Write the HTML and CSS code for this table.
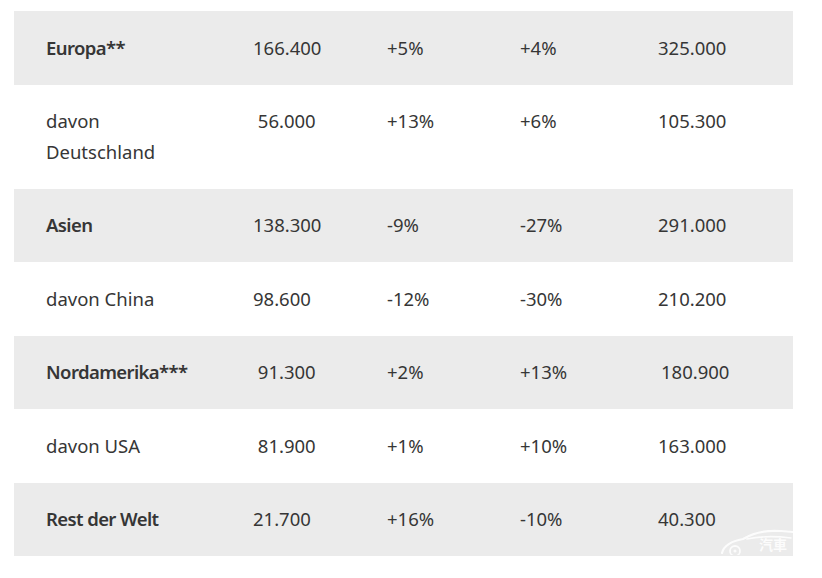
FILE: index.html
```html
<!DOCTYPE html>
<html lang="de">
<head>
<meta charset="utf-8">
<title>Absatz</title>
<link rel="stylesheet" href="styles.css">
</head>
<body>
<div class="table">
  <div class="row shade">
    <div class="cell name bold">Europa**</div>
    <div class="cell">166.400</div>
    <div class="cell">+5%</div>
    <div class="cell">+4%</div>
    <div class="cell">325.000</div>
  </div>
  <div class="row">
    <div class="cell name">davon Deutschland</div>
    <div class="cell">&nbsp;56.000</div>
    <div class="cell">+13%</div>
    <div class="cell">+6%</div>
    <div class="cell">105.300</div>
  </div>
  <div class="row shade">
    <div class="cell name bold">Asien</div>
    <div class="cell">138.300</div>
    <div class="cell">-9%</div>
    <div class="cell">-27%</div>
    <div class="cell">291.000</div>
  </div>
  <div class="row">
    <div class="cell name">davon China</div>
    <div class="cell">98.600</div>
    <div class="cell">-12%</div>
    <div class="cell">-30%</div>
    <div class="cell">210.200</div>
  </div>
  <div class="row shade">
    <div class="cell name bold">Nordamerika***</div>
    <div class="cell">&nbsp;91.300</div>
    <div class="cell">+2%</div>
    <div class="cell">+13%</div>
    <div class="cell ind">180.900</div>
  </div>
  <div class="row">
    <div class="cell name">davon USA</div>
    <div class="cell">&nbsp;81.900</div>
    <div class="cell">+1%</div>
    <div class="cell">+10%</div>
    <div class="cell">163.000</div>
  </div>
  <div class="row shade">
    <div class="cell name bold">Rest der Welt</div>
    <div class="cell">21.700</div>
    <div class="cell">+16%</div>
    <div class="cell">-10%</div>
    <div class="cell">40.300</div>
  </div>
  <div class="watermark">
    <svg class="car" width="74" height="28" viewBox="0 0 74 28">
      <path d="M3 26 C5 18 13 14 24 12 C34 6 48 3 62 4 L74 5" fill="none" stroke="#ffffff" stroke-width="2.2" stroke-linecap="round"/>
      <path d="M28 12 C42 9 56 9 72 11" fill="none" stroke="#ffffff" stroke-width="1.6" stroke-linecap="round"/>
      <circle cx="16" cy="24" r="5" fill="none" stroke="#ffffff" stroke-width="1.8"/>
      <circle cx="16" cy="24" r="1.6" fill="#ffffff"/>
    </svg>
    <span class="wm-text">汽車</span>
  </div>
</div>
</body>
</html>
```

FILE: styles.css
```css
html, body {
  margin: 0;
  padding: 0;
  background: #ffffff;
}

body {
  font-family: "Noto Sans", "Open Sans", "Liberation Sans", sans-serif;
  font-size: 18.5px;
  line-height: 30.5px;
  color: #363636;
}

.table {
  position: relative;
  width: 779px;
  margin: 11px 0 0 14px;
  overflow: hidden;
}

.row {
  display: grid;
  grid-template-columns: 207px 134px 133px 138px 167px;
  padding: 21.5px 0;
}

.shade {
  background: #ebebeb;
}

.cell {
  padding-left: 32px;
  white-space: nowrap;
}

.cell.name {
  white-space: normal;
  padding-right: 28px;
}

.bold {
  font-weight: 600;
  letter-spacing: -0.6px;
}

.ind {
  padding-left: 35px;
}

.watermark {
  position: absolute;
  right: 0;
  bottom: 1px;
  width: 74px;
  height: 28px;
  opacity: 0.85;
}

.car {
  position: absolute;
  left: 0;
  top: 0;
}

.wm-text {
  position: absolute;
  left: 40px;
  top: 9px;
  font-family: "Noto Sans CJK TC", "Noto Sans CJK SC", sans-serif;
  font-size: 14px;
  line-height: 17px;
  font-weight: 700;
  color: #ffffff;
}
```
